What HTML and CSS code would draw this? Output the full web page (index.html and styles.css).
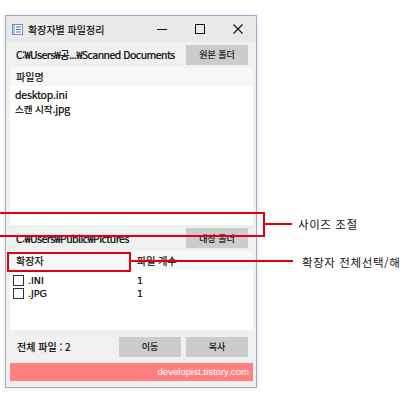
FILE: index.html
```html
<!DOCTYPE html>
<html lang="ko">
<head>
<meta charset="utf-8">
<title>확장자별 파일정리</title>
<link rel="stylesheet" href="styles.css">
</head>
<body>
<div class="stage">
  <div class="window">
    <div class="titlebar">
      <svg class="app-icon" width="11" height="11" viewBox="0 0 11 11">
        <rect x="0.5" y="0.5" width="10" height="10" fill="#fff" stroke="#6a8fc0"/>
        <rect x="1" y="1" width="2" height="9" fill="#9ec3ea"/>
        <line x1="4" y1="3" x2="9" y2="3" stroke="#3d6fb0"/>
        <line x1="4" y1="5.5" x2="9" y2="5.5" stroke="#3d6fb0"/>
        <line x1="4" y1="8" x2="9" y2="8" stroke="#3d6fb0"/>
      </svg>
      <span class="title">확장자별 파일정리</span>
      <div class="controls">
        <svg class="ctl" width="10" height="10" viewBox="0 0 10 10"><line x1="0" y1="5.5" x2="10" y2="5.5" stroke="#111" stroke-width="1"/></svg>
        <svg class="ctl" width="10" height="10" viewBox="0 0 10 10"><rect x="0.5" y="0.5" width="9" height="9" fill="none" stroke="#111" stroke-width="1"/></svg>
        <svg class="ctl" width="10" height="10" viewBox="0 0 10 10"><path d="M0.5 0.5 L9.5 9.5 M9.5 0.5 L0.5 9.5" stroke="#111" stroke-width="1.1"/></svg>
      </div>
    </div>
    <div class="content">
      <div class="path-row">
        <span class="path">C:₩Users₩공...₩Scanned Documents</span>
        <button class="btn">원본 폴더</button>
      </div>
      <div class="list list-top">
        <div class="list-header"><span class="col">파일명</span></div>
        <div class="list-body">
          <div class="item">desktop.ini</div>
          <div class="item"><span class="ko">스캔 시작</span>.jpg</div>
        </div>
      </div>
      <div class="path-row path-row2">
        <span class="path">C:₩Users₩Public₩Pictures</span>
        <button class="btn">대상 폴더</button>
      </div>
      <div class="list list-bottom">
        <div class="list-header">
          <span class="col col-ext">확장자</span>
          <span class="col">파일 개수</span>
        </div>
        <div class="list-body">
          <div class="ext-row"><span class="ext-name"><span class="check"></span>.INI</span><span class="count">1</span></div>
          <div class="ext-row"><span class="ext-name"><span class="check"></span>.JPG</span><span class="count">1</span></div>
        </div>
      </div>
      <div class="bottom-row">
        <span class="total">전체 파일 : 2</span>
        <div class="actions">
          <button class="btn">이동</button>
          <button class="btn">복사</button>
        </div>
      </div>
      <div class="footer">developist.tistory.com</div>
    </div>
  </div>

  <div class="anno anno-size"></div>
  <div class="anno-line anno-line-size"></div>
  <div class="anno-text anno-text-size">사이즈 조절</div>

  <div class="anno anno-ext"></div>
  <div class="anno-line anno-line-ext"></div>
  <div class="anno-text anno-text-ext">확장자 전체선택/해제</div>
</div>
</body>
</html>
```

FILE: styles.css
```css
html, body {
  margin: 0;
  padding: 0;
  background: #ffffff;
}
body {
  font-family: "Noto Sans CJK KR", "Noto Sans", sans-serif;
  font-size: 10px;
  color: #000;
  overflow: hidden;
}
.stage {
  position: relative;
  width: 400px;
  height: 400px;
  overflow: hidden;
}
.window {
  position: absolute;
  left: 5px;
  top: 15px;
  width: 250px;
  height: 371px;
  border: 1px solid #9aaecb;
  background: #f0f0f0;
  box-shadow: 0 0 4px rgba(0,0,0,0.12);
  display: flex;
  flex-direction: column;
  -webkit-text-stroke: 0.2px currentColor;
}
.titlebar {
  height: 26px;
  background: #e9e9e9;
  display: flex;
  align-items: center;
  padding-left: 6px;
  flex: none;
}
.app-icon { flex: none; }
.title {
  margin-left: 5px;
  font-size: 10px;
  color: #111;
}
.controls {
  margin-left: auto;
  display: flex;
  align-items: center;
}
.ctl { margin-right: 28px; }
.ctl:last-child { margin-right: 13px; }
.content {
  flex: 1;
  padding: 0 3px 0 4px;
  display: flex;
  flex-direction: column;
}
.path-row {
  height: 25px;
  display: flex;
  align-items: center;
  justify-content: space-between;
  padding: 0 5px 0 6px;
  flex: none;
}
.path-row2 { height: 26px; }
.path {
  font-size: 10.5px;
  letter-spacing: -0.5px;
  white-space: nowrap;
}
.btn {
  width: 62px;
  height: 20px;
  border: none;
  background: #cccccc;
  font-family: "Noto Sans CJK KR", sans-serif;
  font-size: 9px;
  color: #111;
  padding: 0;
  margin: 0;
  -webkit-text-stroke: 0.2px #111;
}
.list {
  display: flex;
  flex-direction: column;
  background: #ffffff;
}
.list-top { height: 158px; }
.list-bottom { height: 79px; }
.list-header {
  height: 19px;
  background: #f7f7f7;
  display: flex;
  align-items: center;
  flex: none;
}
.col {
  padding-left: 6px;
  font-size: 10px;
  color: #111;
}
.col-ext { width: 115px; }
.list-body {
  flex: 1;
  background: #ffffff;
  padding-top: 2px;
}
.item {
  height: 14px;
  line-height: 14px;
  padding-left: 5px;
  font-size: 10.5px;
  letter-spacing: -0.2px;
}
.ko {
  font-size: 9.6px;
  letter-spacing: -0.1px;
}
.list-bottom .list-body { padding-top: 4px; }
.ext-row {
  height: 13px;
  display: flex;
  align-items: center;
}
.ext-name {
  width: 124px;
  display: flex;
  align-items: center;
  padding-left: 3px;
  font-size: 9.5px;
  font-family: "DejaVu Sans", sans-serif;
}
.check {
  width: 9px;
  height: 9px;
  border: 1px solid #333;
  background: #fff;
  margin-right: 4px;
  flex: none;
}
.count {
  font-size: 9.5px;
  font-family: "DejaVu Sans", sans-serif;
}
.bottom-row {
  height: 33px;
  display: flex;
  align-items: center;
  justify-content: space-between;
  padding: 0 5px 0 7px;
  flex: none;
}
.total { font-size: 10px; }
.actions {
  display: flex;
  gap: 5px;
}
.footer {
  height: 18px;
  background: #ff8080;
  color: #ffffff;
  text-align: right;
  padding-right: 4px;
  font-family: "Liberation Sans", sans-serif;
  font-size: 9.6px;
  line-height: 18px;
  -webkit-text-stroke: 0;
}
.anno {
  position: absolute;
  border: 2px solid #e0000f;
}
.anno-size {
  left: -5px;
  top: 212px;
  width: 266px;
  height: 21px;
}
.anno-ext {
  left: 7px;
  top: 252px;
  width: 120px;
  height: 16px;
}
.anno-line {
  position: absolute;
  height: 2px;
  background: #e0000f;
}
.anno-line-size {
  left: 265px;
  top: 223px;
  width: 27px;
}
.anno-line-ext {
  left: 129px;
  top: 260px;
  width: 164px;
}
.anno-text {
  position: absolute;
  font-size: 11.5px;
  color: #111;
  white-space: nowrap;
  letter-spacing: 0.6px;
}
.anno-text-size {
  left: 298px;
  top: 216px;
}
.anno-text-ext {
  left: 302px;
  top: 254px;
}
```
